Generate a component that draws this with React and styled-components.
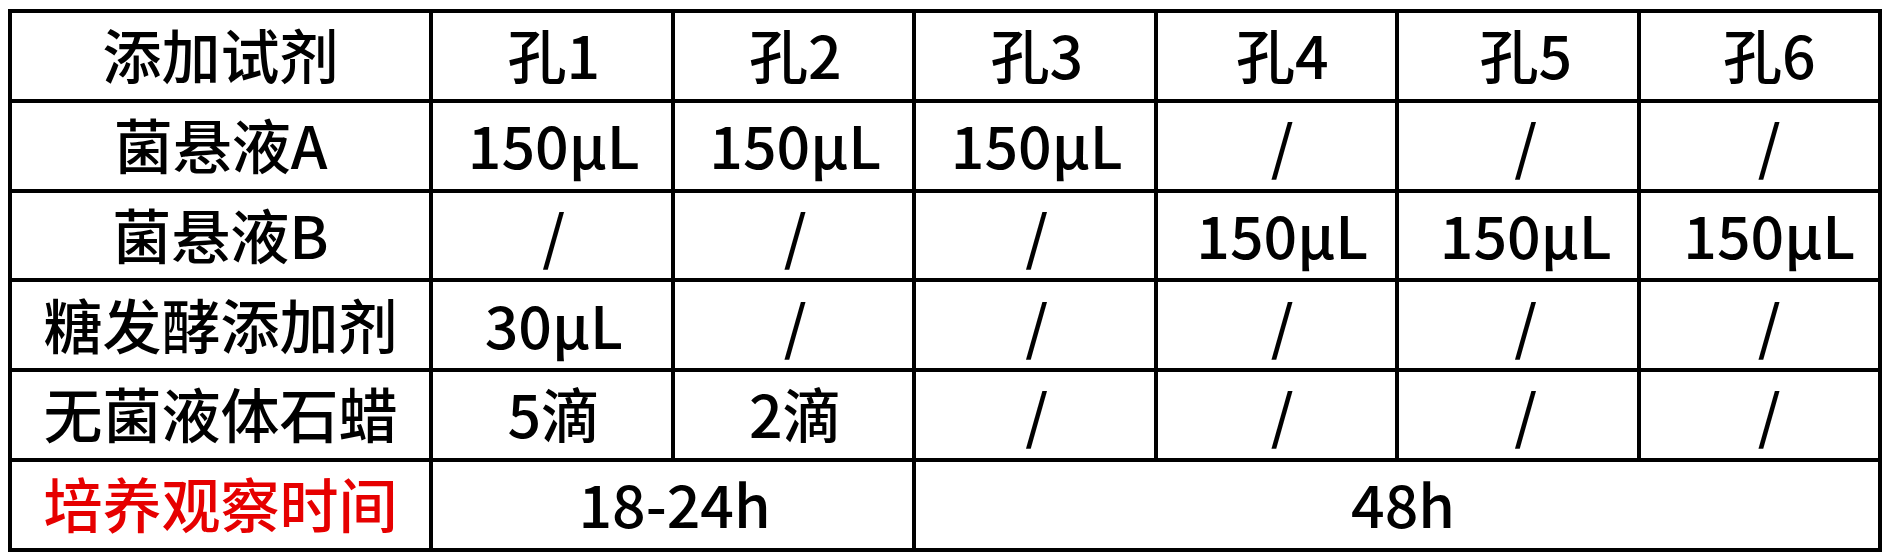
import React from "react";
import styled, { createGlobalStyle } from "styled-components";

const GlobalStyle = createGlobalStyle`
  html, body {
    margin: 0;
    padding: 0;
    background: #ffffff;
  }
  body {
    font-family: "Noto Sans CJK SC", "Noto Sans", sans-serif;
  }
`;

const rows = [
  { label: "菌悬液A", cells: ["150μL", "150μL", "150μL", "/", "/", "/"] },
  { label: "菌悬液B", cells: ["/", "/", "/", "150μL", "150μL", "150μL"] },
  { label: "糖发酵添加剂", cells: ["30μL", "/", "/", "/", "/", "/"] },
  { label: "无菌液体石蜡", cells: ["5滴", "2滴", "/", "/", "/", "/"] },
];

// the source sheet sits its text a little right of centre in the later columns
const shifts = [2, 2, 2, 6, 8, 10];

const App = () => {
  return (
    <Page>
      <GlobalStyle />
      <Grid>
        <Cell>添加试剂</Cell>
        {[1, 2, 3, 4, 5, 6].map((n, i) => (
          <Cell key={n} $shift={shifts[i]}>
            孔{n}
          </Cell>
        ))}
        {rows.map((row) => (
          <React.Fragment key={row.label}>
            <Cell>{row.label}</Cell>
            {row.cells.map((c, i) => (
              <Cell key={i} $shift={shifts[i]}>
                {c}
              </Cell>
            ))}
          </React.Fragment>
        ))}
        <Cell $red>培养观察时间</Cell>
        <Cell $span={2} $shift={2}>
          18-24h
        </Cell>
        <Cell $span={4} $shift={6}>
          48h
        </Cell>
      </Grid>
    </Page>
  );
};

export default App;

const Page = styled.div`
  padding: 9px 8px;
`;

const Grid = styled.div`
  width: 1874px;
  box-sizing: border-box;
  display: grid;
  grid-template-columns: 417px repeat(6, 1fr);
  grid-auto-rows: 85.75px;
  gap: 4px;
  padding: 4px;
  background: #000000;
`;

const Cell = styled.div`
  grid-column: span ${(p) => p.$span || 1};
  background: #ffffff;
  display: flex;
  align-items: center;
  justify-content: center;
  padding: 0 0 4px ${(p) => (p.$shift || 0) * 2}px;
  font-size: 59px;
  font-weight: 500;
  color: ${(p) => (p.$red ? "#e60000" : "#000000")};
  line-height: 1;
  white-space: nowrap;
`;
